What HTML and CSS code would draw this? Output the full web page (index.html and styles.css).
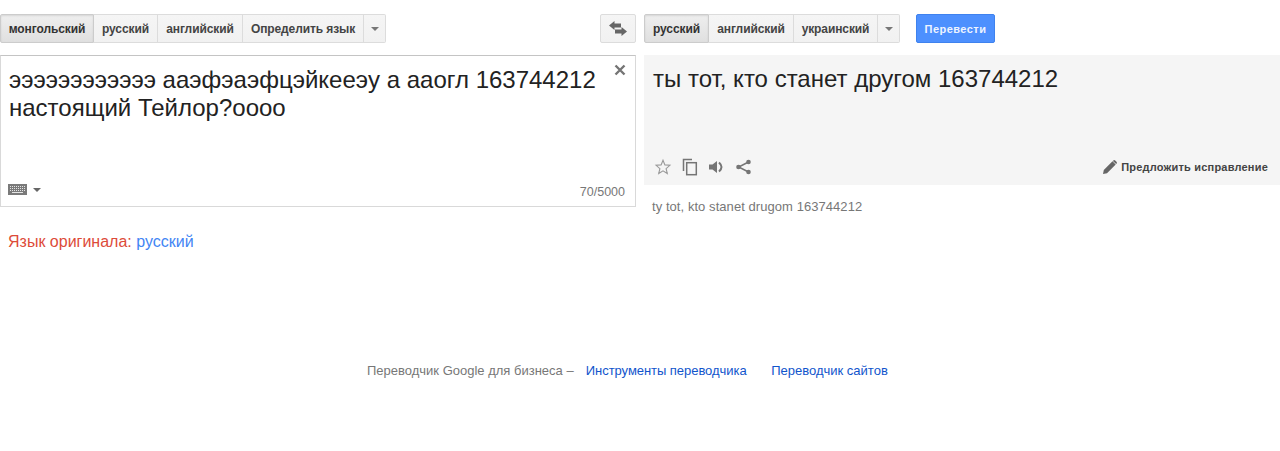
FILE: index.html
```html
<!DOCTYPE html>
<html lang="ru">
<head>
<meta charset="utf-8">
<title>Переводчик</title>
<link rel="stylesheet" href="styles.css">
</head>
<body>
<main class="columns">
  <section class="col">
    <div class="toolbar between">
      <div class="group">
        <button class="seg on w94">монгольский</button>
        <button class="seg w64">русский</button>
        <button class="seg w85">английский</button>
        <button class="seg w121">Определить язык</button>
        <button class="seg arrow"><span class="caret"></span></button>
      </div>
      <button class="swap" aria-label="swap">
        <svg width="18" height="15" viewBox="0 0 18 15"><path class="ic" d="M0 4.500 5.500 0v2.500H12v4H5.500V9z"/><path class="ic" d="M18 10.500 12.500 6v2.500H6v4h6.500V15z"/></svg>
      </button>
    </div>
    <div class="source">
      <div class="source-text">ээээээээээээ ааэфэаэфцэйкееэу а ааогл 163744212 настоящий Тейлор?оооо</div>
      <svg class="clear" width="12" height="12" viewBox="0 0 12 12"><path d="M1.500 1.500l9 9M10.500 1.500l-9 9" stroke="#757575" stroke-width="2.400" fill="none"/></svg>
      <div class="source-foot">
        <div class="kbd">
          <svg width="19" height="11" viewBox="0 0 19 11"><rect width="19" height="11" fill="#7a7a7a"/><path d="M2 2.500h15M2 4.500h15M2 6.500h15" stroke="#e4e4e4" stroke-dasharray="1 1"/><path d="M4 8.500h11" stroke="#e4e4e4"/></svg>
          <span class="caret small"></span>
        </div>
        <span class="count">70/5000</span>
      </div>
    </div>
    <p class="origin">Язык оригинала: <a class="blue" href="#">русский</a></p>
  </section>
  <section class="col">
    <div class="toolbar">
      <div class="group">
        <button class="seg on w65">русский</button>
        <button class="seg w85">английский</button>
        <button class="seg w84">украинский</button>
        <button class="seg arrow"><span class="caret"></span></button>
      </div>
      <button class="go">Перевести</button>
    </div>
    <div class="target">
      <div class="target-text">ты тот, кто станет другом 163744212</div>
      <div class="target-foot">
        <div class="icons">
          <svg width="18" height="18" viewBox="0 0 18 18"><path d="M9 2.200l1.900 4.700 5 .4-3.800 3.300 1.200 4.900L9 12.900l-4.300 2.600 1.200-4.900-3.800-3.300 5-.4z" fill="none" stroke="#999" stroke-width="1.100"/></svg>
          <svg class="i-copy" width="16" height="18" viewBox="0 0 16 18"><path d="M1.500 13V1.500H10" fill="none" stroke="#757575" stroke-width="1.500"/><rect x="4.700" y="4.700" width="9.600" height="12" fill="none" stroke="#757575" stroke-width="1.500"/></svg>
          <svg class="i-sound" width="17" height="18" viewBox="0 0 17 18"><path d="M1 6.500h3.500L9 3v12l-4.500-3.500H1z" fill="#757575"/><path d="M11 4.500q5 4.500 0 9" fill="none" stroke="#757575" stroke-width="2"/></svg>
          <svg class="i-share" width="15" height="18" viewBox="0 0 15 18"><path d="M12.500 4 2.700 9l9.800 5" fill="none" stroke="#757575" stroke-width="1.500"/><circle cx="12.500" cy="4" r="2.300" fill="#757575"/><circle cx="2.500" cy="9" r="2.300" fill="#757575"/><circle cx="12.500" cy="14" r="2.300" fill="#757575"/></svg>
        </div>
        <a class="suggest" href="#">
          <svg width="14" height="14" viewBox="0 0 14 14"><path d="M0 14l.8-4L9.500 1.300l3.200 3.200L4 13.200zM10.300.5q1-.8 1.900 0l1.300 1.300q.8.900 0 1.900l-.4.400-3.200-3.200z" fill="#666"/></svg>
          Предложить исправление
        </a>
      </div>
    </div>
    <p class="translit">ty tot, kto stanet drugom 163744212</p>
  </section>
</main>
<footer class="foot">
  <span class="muted">Переводчик Google для бизнеса –</span>
  <a class="link first" href="#">Инструменты переводчика</a>
  <a class="link second" href="#">Переводчик сайтов</a>
</footer>
</body>
</html>
```
FILE: styles.css
```css
* { box-sizing: border-box; }
html, body { margin: 0; background: #fff; }
body { font-family: "Liberation Sans", Arial, sans-serif; color: #222; height: 451px; overflow: hidden; }
.columns { display: flex; gap: 8px; padding-top: 14px; }
.col { width: 636px; flex: none; }
.toolbar { display: flex; height: 29px; align-items: stretch; }
.between { justify-content: space-between; }
.group { display: flex; }
.seg {
  height: 29px; padding: 0; margin: 0; font: bold 12px "Liberation Sans", Arial, sans-serif; letter-spacing: -.1px; color: #444;
  background: linear-gradient(#f5f5f5, #f1f1f1); border: 1px solid #dcdcdc; border-left-width: 0;
  text-align: center;
}
.seg:first-child { border-left-width: 1px; border-radius: 2px 0 0 2px; }
.seg:last-child { border-radius: 0 2px 2px 0; }
.seg.on { background: linear-gradient(#eee, #e0e0e0); color: #333; border-color: #ccc; box-shadow: inset 0 1px 2px rgba(0,0,0,.1); }
.w94 { width: 94px; } .w64 { width: 64px; } .w65 { width: 65px; } .w85 { width: 85px; } .w84 { width: 84px; } .w121 { width: 121px; }
.arrow { width: 22px; display: flex; align-items: center; justify-content: center; }
.caret { display: block; width: 0; height: 0; border: 4px solid transparent; border-top: 4px solid #777; border-bottom-width: 0; }
.caret.small { border-top-color: #666; }
.swap { width: 36px; height: 29px; padding: 0; background: linear-gradient(#f5f5f5, #f1f1f1); border: 1px solid #dcdcdc; border-radius: 2px; display: flex; align-items: center; justify-content: center; }
.ic { fill: #666; }
.go { width: 79px; margin-left: 16px; padding: 0; background: #4d90fe; border: 1px solid #3f82ee; border-radius: 2px; color: #eef4ff; font: bold 11px "Liberation Sans", Arial, sans-serif; letter-spacing: .45px; }
.source { position: relative; margin-top: 12px; height: 152px; border: 1px solid #d9d9d9; border-top-color: #c4c4c4; padding: 10px 40px 0 8px; display: flex; flex-direction: column; justify-content: space-between; }
.source-text { font-size: 24px; line-height: 28px; color: #222; margin-right: -2px; }
.clear { position: absolute; top: 8px; right: 9px; }
.source-foot { display: flex; justify-content: space-between; align-items: center; margin-right: -30px; margin-left: -1px; height: 33px; }
.kbd { display: flex; align-items: center; gap: 6px; }
.count { font-size: 12.500px; color: #777; margin-top: 4px; }
.origin { margin: 26px 0 0 8px; font-size: 16px; line-height: 18px; color: #dd4b39; }
.blue { color: #4285f4; text-decoration: none; }
.target { margin-top: 12px; height: 130px; background: #f5f5f5; padding: 10px 12px 0 9px; display: flex; flex-direction: column; justify-content: space-between; }
.target-text { font-size: 24px; line-height: 28px; color: #222; }
.target-foot { display: flex; justify-content: space-between; align-items: center; height: 36px; }
.icons { display: flex; align-items: center; margin-left: 1px; }
.i-copy { margin-left: 10px; }
.i-sound { margin-left: 10px; }
.i-share { margin-left: 11px; }
.suggest { display: flex; align-items: center; gap: 4px; font-size: 11px; letter-spacing: .2px; font-weight: bold; color: #444; text-decoration: none; }
.translit { margin: 14px 0 0 8px; font-size: 13px; letter-spacing: .06px; line-height: 16px; color: #777; }
.foot { margin-top: 112px; padding-left: 367px; font-size: 13px; line-height: 16px; white-space: nowrap; }
.muted { color: #777; }
.link { color: #1155cc; text-decoration: none; }
.first { margin-left: 8.500px; letter-spacing: -.05px; }
.second { margin-left: 21px; }
```
